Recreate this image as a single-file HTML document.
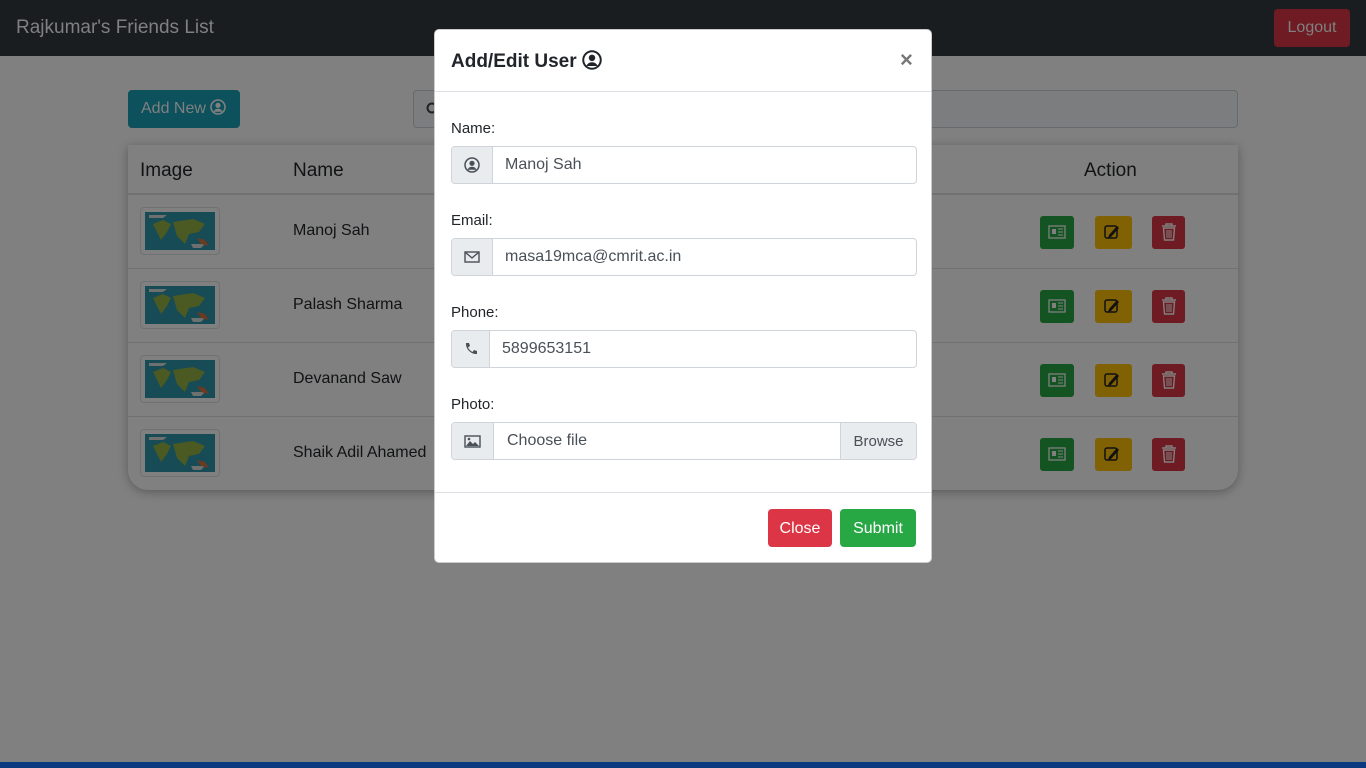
<!DOCTYPE html>
<html><head><meta charset="utf-8"><style>
*{box-sizing:border-box;margin:0;padding:0}
body{width:1366px;height:768px;overflow:hidden;background:#808080;font-family:"Segoe UI","Liberation Sans",sans-serif;color:#111214;position:relative}
.abs{position:absolute}
.nav{left:0;top:0;width:1366px;height:56px;background:#1a1d20}
.brand{left:16px;top:17px;font-size:19px;color:#7f8080}
.logout{left:1274px;top:9px;width:76px;height:38px;background:#6e1b23;border-radius:4px;color:#808080;font-size:16px;text-align:center;line-height:38px}
.addnew{left:128px;top:90px;width:112px;height:38px;background:#0c515c;border-radius:4px;color:#808080;font-size:16px;line-height:38px;padding-left:13px}
.search{left:413px;top:90px;width:825px;height:38px;border:1px solid #676a6d;border-radius:4px;background:#7c7d7e}
.card{left:128px;top:145px;width:1110px;height:345px;background:#808080;border-radius:0 0 20px 20px;box-shadow:0 2px 10px rgba(0,0,0,.3)}
.th{top:160px;font-size:19px}
.row{left:128px;width:1110px;height:1px;background:#6f7173}
.thumb{left:140px;width:80px;height:48px;border:1px solid #6f7173;border-radius:4px;background:#808080;padding:4px}
.nm{left:293px;font-size:16px;color:#111214}
.b{height:33px;border-radius:3px}
.modal{left:434px;top:29px;width:498px;height:534px;background:#fff;border-radius:5px;border:1px solid rgba(0,0,0,.2)}
.lbl{left:16px;font-size:15px;color:#212529}
.ig{left:16px;width:466px;height:38px;border:1px solid #ced4da;border-radius:4px;background:#fff;overflow:hidden}
.ig .ad{position:absolute;left:0;top:0;height:36px;background:#e9ecef;border-right:1px solid #ced4da;display:flex;align-items:center;justify-content:center}
.ig .tx{position:absolute;top:9px;font-size:16px;color:#495057}
</style></head><body>
<div class="abs nav"></div>
<div class="abs brand">Rajkumar's Friends List</div>
<div class="abs logout">Logout</div>
<div class="abs addnew">Add New <svg width="16" height="16" viewBox="0 0 16 16" style="vertical-align:-2px"><circle cx="8" cy="8" r="7" fill="none" stroke="#808080" stroke-width="1.6"/><circle cx="8" cy="6.3" r="2.6" fill="#808080"/><path d="M3.5 12.8c1-2.2 2.5-3 4.5-3s3.5.8 4.5 3" fill="#808080"/></svg></div>
<div class="abs search"><svg class="abs" style="left:12px;top:11px" width="14" height="14" viewBox="0 0 14 14"><circle cx="6" cy="6" r="4.5" fill="none" stroke="#222" stroke-width="2"/><path d="M9.5 9.5l3.5 3.5" stroke="#222" stroke-width="2"/></svg></div>
<div class="abs card"></div>
<div class="abs th" style="left:140px">Image</div>
<div class="abs th" style="left:293px">Name</div>
<div class="abs th" style="left:1084px">Action</div>
<div class="abs row" style="top:193px;height:2px"></div>
<div class="abs row" style="top:268px"></div>
<div class="abs row" style="top:342px"></div>
<div class="abs row" style="top:416px"></div>

<svg width="0" height="0" style="position:absolute"><defs><g id="map"><rect width="70" height="38" fill="#174b55"/><path d="M4 3h18l-4 3 H4z M46 32h14l-4 4h-8z" fill="#6e7070"/><path d="M8 12l10-4 8 4-4 8-6 8-4-8z M28 10l20-3 12 5-6 8-10 2-4 10-8-8z" fill="#4b5a22"/><path d="M52 26l8 2 4 6-8-2z" fill="#6a3a22"/></g></defs></svg>
<div class="abs thumb" style="top:207px"><svg width="70" height="38"><use href="#map"/></svg></div>
<div class="abs thumb" style="top:281px"><svg width="70" height="38"><use href="#map"/></svg></div>
<div class="abs thumb" style="top:355px"><svg width="70" height="38"><use href="#map"/></svg></div>
<div class="abs thumb" style="top:429px"><svg width="70" height="38"><use href="#map"/></svg></div>
<div class="abs nm" style="top:222px">Manoj Sah</div>
<div class="abs nm" style="top:296px">Palash Sharma</div>
<div class="abs nm" style="top:370px">Devanand Saw</div>
<div class="abs nm" style="top:444px">Shaik Adil Ahamed</div>

<div class="abs b" style="left:1040px;top:216px;width:34px;background:#145423"></div><div class="abs b" style="left:1095px;top:216px;width:37px;background:#806104"></div><div class="abs b" style="left:1152px;top:216px;width:33px;background:#6e1b23"></div>
<div class="abs b" style="left:1040px;top:290px;width:34px;background:#145423"></div><div class="abs b" style="left:1095px;top:290px;width:37px;background:#806104"></div><div class="abs b" style="left:1152px;top:290px;width:33px;background:#6e1b23"></div>
<div class="abs b" style="left:1040px;top:364px;width:34px;background:#145423"></div><div class="abs b" style="left:1095px;top:364px;width:37px;background:#806104"></div><div class="abs b" style="left:1152px;top:364px;width:33px;background:#6e1b23"></div>
<div class="abs b" style="left:1040px;top:438px;width:34px;background:#145423"></div><div class="abs b" style="left:1095px;top:438px;width:37px;background:#806104"></div><div class="abs b" style="left:1152px;top:438px;width:33px;background:#6e1b23"></div>
<svg class="abs" style="left:0;top:0" width="1366" height="768">
<g id="ic">
<rect x="1049" y="226" width="16" height="12" fill="none" stroke="#808080" stroke-width="1.3"/><rect x="1052" y="229" width="4" height="5" fill="#808080"/><path d="M1058 229h5M1058 232h5M1058 235h5" stroke="#808080"/>
<rect x="1105" y="226" width="12" height="12" rx="2" fill="none" stroke="#111" stroke-width="1.5"/><path d="M1109 235l8-9 2 2-8 9-3 1z" fill="#111"/>
<path d="M1162 226h14M1166 226v-2h6v2M1163.5 228h11l-1 12h-9z" fill="none" stroke="#808080" stroke-width="1.4"/><path d="M1167 230v8M1169 230v8M1171 230v8" stroke="#808080"/>
</g>
<use href="#ic" y="74"/><use href="#ic" y="148"/><use href="#ic" y="222"/>
</svg>
<div class="abs" style="left:0;top:762px;width:1366px;height:6px;background:#0b3a80"></div>

<div class="abs modal">
  <div class="abs" style="left:16px;top:20px;font-size:19px;font-weight:600;color:#212529">Add/Edit User <svg width="20" height="20" viewBox="0 0 16 16" style="vertical-align:-3px"><circle cx="8" cy="8" r="7" fill="none" stroke="#212529" stroke-width="1.6"/><circle cx="8" cy="6.3" r="2.6" fill="#212529"/><path d="M3.5 12.8c1-2.2 2.5-3 4.5-3s3.5.8 4.5 3" fill="#212529"/></svg></div>
  <div class="abs" style="left:465px;top:17px;font-size:22px;color:#777;font-weight:bold">×</div>
  <div class="abs" style="left:0;top:61px;width:496px;height:1px;background:#dee2e6"></div>

  <div class="abs lbl" style="top:90px">Name:</div>
  <div class="abs ig" style="top:116px"><div class="ad" style="width:41px"><svg width="16" height="16" viewBox="0 0 16 16"><circle cx="8" cy="8" r="7" fill="none" stroke="#495057" stroke-width="1.5"/><circle cx="8" cy="6.3" r="2.6" fill="#495057"/><path d="M3.5 12.8c1-2.2 2.5-3 4.5-3s3.5.8 4.5 3" fill="#495057"/></svg></div><div class="tx" style="left:53px">Manoj Sah</div></div>

  <div class="abs lbl" style="top:182px">Email:</div>
  <div class="abs ig" style="top:208px"><div class="ad" style="width:41px"><svg width="16" height="12"><rect x="1" y="1" width="14" height="10" fill="none" stroke="#495057" stroke-width="1.4"/><path d="M1 1l7 6 7-6" fill="none" stroke="#495057" stroke-width="1.4"/></svg></div><div class="tx" style="left:53px">masa19mca@cmrit.ac.in</div></div>

  <div class="abs lbl" style="top:274px">Phone:</div>
  <div class="abs ig" style="top:300px"><div class="ad" style="width:38px"><svg width="14" height="14" viewBox="0 0 14 14"><path d="M2 1l3 0 1 3-2 1.5c1 2 2.5 3.5 4.5 4.5L10 8l3 1v3c-6 .5-11.5-5-11-11z" fill="#495057"/></svg></div><div class="tx" style="left:50px">5899653151</div></div>

  <div class="abs lbl" style="top:366px">Photo:</div>
  <div class="abs ig" style="top:392px"><div class="ad" style="width:42px"><svg width="17" height="13"><rect x="1" y="1" width="15" height="11" fill="none" stroke="#495057" stroke-width="1.4"/><path d="M2 11l4-5 3 3 2-2 4 4z" fill="#495057"/><circle cx="5" cy="4" r="1.3" fill="#495057"/></svg></div><div class="tx" style="left:55px">Choose file</div>
  <div style="position:absolute;right:0;top:0;width:76px;height:36px;background:#e9ecef;border-left:1px solid #ced4da;font-size:15px;line-height:37px;text-align:center;color:#495057">Browse</div></div>

  <div class="abs" style="left:0;top:462px;width:496px;height:1px;background:#dee2e6"></div>
  <div class="abs" style="left:333px;top:479px;width:64px;height:38px;background:#dc3545;border-radius:4px;color:#fff;font-size:16px;line-height:39px;text-align:center">Close</div>
  <div class="abs" style="left:405px;top:479px;width:76px;height:38px;background:#28a745;border-radius:4px;color:#fff;font-size:16px;line-height:39px;text-align:center">Submit</div>
</div>
</body></html>
